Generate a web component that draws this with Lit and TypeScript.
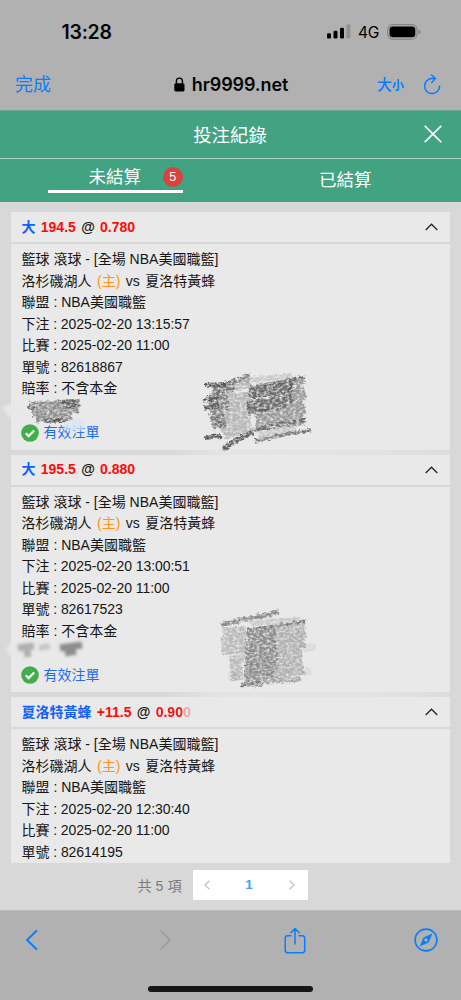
import { LitElement, html, svg, css, nothing } from "lit";
import { customElement, property } from "lit/decorators.js";

interface Bet {
  pick: string;
  line: string;
  odds: string;
  placed: string;
  id: string;
}

const BETS: Bet[] = [
  { pick: "大", line: "194.5", odds: "0.780", placed: "13:15:57", id: "82618867" },
  { pick: "大", line: "195.5", odds: "0.880", placed: "13:00:51", id: "82617523" },
  { pick: "夏洛特黃蜂", line: "+11.5", odds: "0.900", placed: "12:30:40", id: "82614195" },
];

@customElement("bet-card")
class BetCard extends LitElement {
  @property({ attribute: false }) bet!: Bet;
  @property({ type: Boolean }) partial = false;

  static styles = css`
    :host { display: block; flex: none; background: #e9e9e9; color: #161616;
      font: 14px/21.5px "Liberation Sans", "Noto Sans CJK TC", sans-serif; }
    .head { display: flex; align-items: center; justify-content: space-between; box-sizing: border-box;
      height: 32px; padding: 0 12px 0 10.5px; border-bottom: 2px solid #d8d8d8; font-weight: 700; }
    .head p { margin: 0; white-space: pre; word-spacing: 1.4px; padding-top: 1px; }
    .pick { color: #0f62fe; }
    .red { color: #ff0a0a; }
    .faded { background: linear-gradient(90deg, #ff0a0a 72%, #f3a5a5 82%); background-clip: text; -webkit-background-clip: text; color: transparent; }
    .body { padding: 5px 10.5px 0; height: 200.5px; }
    .row { height: 21.5px; white-space: pre; }
    .teams { word-spacing: 1.6px; }
    .time { letter-spacing: -.06px; }
    .home { color: #ff9321; }
    .valid { display: flex; align-items: center; gap: 4.5px; color: #1b6cf5; margin-top: 1px; margin-left: -.5px; }
    svg { display: block; }
  `;

  render() {
    const b = this.bet;
    return html`
      <div class="head">
        <p><span class="pick">${b.pick}</span> <span class="red">${b.line}</span> @ <span class=${this.partial ? "faded" : "red"}>${b.odds}</span></p>
        <svg width="13" height="8" viewBox="0 0 13 8" fill="none" stroke="#222" stroke-width="1.25"><path d="M.7 7 6.5 1.2 12.3 7" /></svg>
      </div>
      <div class="body">
        <div class="row">籃球 滾球 - [全場 NBA美國職籃]</div>
        <div class="row teams">洛杉磯湖人 <span class="home">(主)</span> vs 夏洛特黃蜂</div>
        <div class="row">聯盟 : NBA美國職籃</div>
        <div class="row time">下注 : 2025-02-20 ${b.placed}</div>
        <div class="row time">比賽 : 2025-02-20 11:00</div>
        <div class="row time">單號 : ${b.id}</div>
        ${this.partial ? nothing : html`
          <div class="row">賠率 : 不含本金</div>
          <div class="row"></div>
          <div class="row valid">
            <svg width="18" height="18" viewBox="0 0 18 18"><circle cx="9" cy="9" r="8.8" fill="#43ad4b" /><path d="m4.7 9.2 2.9 2.9 5.6-5.7" fill="none" stroke="#fff" stroke-width="2.2" /></svg>
            <span>有效注單</span>
          </div>`}
      </div>`;
  }
}

/* Hatched pencil band following a slanted stroke */
const band = (d: string, width: number, opacity: number) =>
  svg`<path d=${d} stroke-width=${width} stroke-opacity=${opacity} />`;

@customElement("app-root")
class AppRoot extends LitElement {
  static styles = css`
    :host { display: flex; flex-direction: column; position: relative; width: 461px; height: 1000px; overflow: hidden;
      background: #d8d8d8; font-family: "Liberation Sans", "Noto Sans CJK TC", sans-serif; }
    svg { display: block; flex: none; }
    .status { display: flex; align-items: center; height: 62px; box-sizing: border-box; padding: 1px 40px 0 61.5px; background: #b1b1b1; }
    .time { font: 600 19.5px Inter, sans-serif; letter-spacing: -.25px; flex: 1; color: #050505; }
    .net { font: 400 15.6px Inter, sans-serif; margin: 0 8px 0 7px; letter-spacing: -.3px; padding-top: 2px; }
    .address { display: grid; grid-template-columns: 1fr auto 1fr; align-items: center; height: 48px; box-sizing: border-box;
      padding: 0 20px 4px 15px; background: #b1b1b1; color: #087dff; }
    .done { font: 18px/24px "Noto Sans CJK TC", sans-serif; padding-bottom: 2px; }
    .site { display: flex; align-items: center; gap: 7px; color: #050505; font: 600 18px Inter, sans-serif; letter-spacing: -.1px; padding-left: 6px; }
    .tools { display: flex; justify-content: flex-end; align-items: center; gap: 19px; font-family: "Noto Sans CJK TC", sans-serif; font-weight: 500; }
    .size { font-size: 15px; padding-bottom: 2px; } .size small { font-size: 12px; font-weight: 700; }
    .title { display: grid; grid-template-columns: 1fr auto 1fr; align-items: center; height: 49px; box-sizing: border-box;
      padding: 0 19px 2px 18px; background: #41a381; color: #fff; font-size: 18.4px; border-bottom: 1px solid #b4d2c7; border-top: 1px solid #6fa893; }
    .close { justify-self: end; }
    .tabs { display: grid; grid-template-columns: 1fr 1fr; height: 43px; background: #41a381; color: #fff; font-size: 17.5px; }
    .tab { display: flex; justify-content: center; }
    .tab.on span { box-sizing: border-box; width: 135px; height: 34px; border-bottom: 3px solid #fff; text-align: center; line-height: 36px; padding-right: 1px; }
    .tab.off { line-height: 42px; padding-right: 1px; }
    .wrap { position: relative; display: flex; }
    .wrap b { position: absolute; right: 0; top: 8px; width: 20px; height: 20px; border-radius: 50%; background: #da423e;
      font: 12.5px/20px "Liberation Sans", sans-serif; text-align: center; }
    .list { display: flex; flex-direction: column; gap: 5px; height: 660.5px; box-sizing: border-box; padding: 10px 11px 0 11px; overflow: hidden; }
    bet-card { height: 237.5px; }
    .pager { display: flex; justify-content: center; align-items: center; gap: 11px; flex: 1; padding: 0 16px 3px 0; color: #7b7b7d; font-size: 14.2px; white-space: pre; }
    .pages { display: flex; align-items: center; justify-content: space-between; box-sizing: border-box; width: 115px; height: 30px; padding: 0 13px 0 11px; background: #fff; color: #409eff; font-size: 13.5px; font-weight: 700; }
    .bottom { height: 90px; box-sizing: border-box; border-top: 1px solid #bdbdbd; background: #b1b1b1; display: flex; flex-direction: column; align-items: center; }
    .nav { display: flex; align-items: center; align-self: stretch; height: 58px; padding: 0 23px 0 24.5px; }
    .next { margin: 0 112px 0 121px; }
    .compass { margin-left: 108px; }
    .home { width: 165px; height: 5.6px; border-radius: 3px; background: #161616; margin-top: 17px; }
    .marks { position: absolute; inset: 0; pointer-events: none; }
  `;

  render() {
    return html`
      <div class="status">
        <span class="time">13:28</span>
        <svg width="24" height="15" viewBox="0 0 24 15"><rect x="0" y="9.2" width="4" height="5.3" rx="1.2" /><rect x="6.5" y="6.8" width="4" height="7.7" rx="1.2" /><rect x="13" y="3.7" width="4" height="10.8" rx="1.2" /><rect x="19.4" y=".4" width="4" height="14.1" rx="1.2" fill="#929292" /></svg>
        <span class="net">4G</span>
        <svg width="34" height="16" viewBox="0 0 34 16"><rect x=".7" y=".7" width="29.4" height="14.4" rx="4.8" fill="none" stroke="#858585" stroke-width="1.2" /><rect x="2.5" y="2.5" width="25.8" height="10.8" rx="3.2" /><path d="M31.6 5.4v5q2-.7 2-2.5t-2-2.5" fill="#858585" /></svg>
      </div>
      <div class="address">
        <span class="done">完成</span>
        <span class="site"><svg width="11" height="15" viewBox="0 0 11 15"><rect x=".3" y="6.2" width="10.2" height="8.4" rx="1.6" /><path d="M2.4 7V4.1a3 3 0 0 1 6 0V7" fill="none" stroke="#000" stroke-width="1.4" /></svg>hr9999.net</span>
        <span class="tools"><span class="size">大<small>小</small></span>
          <svg width="18" height="21" viewBox="0 0 18 21" fill="none" stroke="#087dff" stroke-width="1.5" stroke-linecap="round" stroke-linejoin="round"><path d="M12.4 4.6H9.1A7.5 7.5 0 1 0 16.6 12M8.5 1l4 3.6-3.7 3.9" /></svg></span>
      </div>
      <div class="title"><i></i><span>投注紀錄</span>
        <svg class="close" width="18" height="18" viewBox="0 0 18 18" stroke="#fff" stroke-width="1.7"><path d="m.8.8 16.4 16.4m0-16.4L.8 17.2" /></svg></div>
      <div class="tabs">
        <div class="tab on"><div class="wrap"><span>未結算</span><b>5</b></div></div>
        <div class="tab off"><span>已結算</span></div>
      </div>
      <div class="list">${BETS.map((b, i) => html`<bet-card .bet=${b} ?partial=${i === 2}></bet-card>`)}</div>
      <div class="pager"><span>共 5 項</span>
        <div class="pages">
          <svg width="6" height="10" viewBox="0 0 6 10" fill="none" stroke="#c0c4cc" stroke-width="1.3"><path d="M5.4.7 1 5l4.4 4.3" /></svg>
          <span>1</span>
          <svg width="6" height="10" viewBox="0 0 6 10" fill="none" stroke="#c0c4cc" stroke-width="1.3"><path d="M.6.7 5 5 .6 9.3" /></svg>
        </div>
      </div>
      <div class="bottom">
        <div class="nav">
          <svg width="13" height="20" viewBox="0 0 13 20" fill="none" stroke="#087dff" stroke-width="1.9" stroke-linecap="round" stroke-linejoin="round"><path d="M11.4 1 2 10l9.4 9" /></svg>
          <svg class="next" width="13" height="20" viewBox="0 0 13 20" fill="none" stroke="#9b9b9b" stroke-width="1.5" stroke-linecap="round" stroke-linejoin="round"><path d="M2 1l9 9-9 9" /></svg>
          <svg width="22" height="27" viewBox="0 0 22 27" fill="none" stroke="#087dff" stroke-width="1.5" stroke-linecap="round" stroke-linejoin="round"><path d="M7 8.7H3.6Q1.2 8.7 1.2 11v12.3q0 2.4 2.4 2.4h14.7q2.4 0 2.4-2.4V11q0-2.3-2.4-2.3H15M11 17V1.6M6.8 5.8 11 1.6l4.2 4.2" /></svg>
          <svg class="compass" width="24" height="24" viewBox="0 0 24 24"><circle cx="12" cy="12" r="10.9" fill="none" stroke="#087dff" stroke-width="1.6" /><path fill="#087dff" fill-rule="evenodd" d="M18.4 5.6 14.6 14.4 5.6 18.4 9.5 9.6ZM12 10.3a1.7 1.7 0 1 0 0 3.4 1.7 1.7 0 1 0 0-3.4Z" /></svg>
        </div>
        <div class="home"></div>
      </div>
      <svg class="marks" width="461" height="1000" viewBox="0 0 461 1000" fill="none" stroke="#555">
        <defs>
          <filter id="pencil" filterUnits="userSpaceOnUse" x="0" y="360" width="461" height="340">
            <feTurbulence type="fractalNoise" baseFrequency=".3 .42" numOctaves="3" seed="4" result="n" />
            <feDisplacementMap in="SourceGraphic" in2="n" scale="5" xChannelSelector="R" yChannelSelector="G" result="d" />
            <feColorMatrix in="n" values="0 0 0 0 0 0 0 0 0 0 0 0 0 0 0 0 0 0 2.2 -.35" result="a" />
            <feComposite in="d" in2="a" operator="in" />
            <feGaussianBlur stdDeviation=".5" />
          </filter>
          <filter id="soft" filterUnits="userSpaceOnUse" x="0" y="360" width="461" height="340"><feGaussianBlur stdDeviation="1.8" /></filter>
          <linearGradient id="smear"><stop offset="0" stop-color="#e8e8e8" stop-opacity="0" /><stop offset=".2" stop-color="#e7e7e7" stop-opacity=".8" /><stop offset=".7" stop-color="#e7e7e7" stop-opacity=".75" /><stop offset="1" stop-color="#e7e7e7" stop-opacity=".3" /></linearGradient>
        </defs>
        <g stroke="none">
          <rect x="165" y="449" width="285" height="6" fill="url(#smear)" />
          <rect x="165" y="692" width="285" height="5" fill="url(#smear)" />
          <path d="M2 407 30 400V422L8 416Z" fill="#e8e8e8" filter="url(#soft)" />
          <ellipse cx="15" cy="650" rx="8" ry="7" fill="#e8e8e8" filter="url(#soft)" />
          <rect x="64" y="419" width="20" height="12" fill="#dbe5f6" opacity=".75" filter="url(#soft)" />
        </g>
        <g filter="url(#pencil)">
          ${band("M205 385 225 384M203 400l16-3M204 408l15-3M204 438l18-2", 4, 1)}
          ${band("M212 390 234 386M210 399 226 395M210 408 228 405M210 417 224 414M212 425 226 422", 9, .68)}
          ${band("M225 390 250 382M224 399 250 396M224 408 250 403M222 418 250 411M220 427 250 420M224 435 250 427", 9, .36)}
          ${band("M222 385 238 380 250 375", 4, .75)}
          ${band("M222 450 236 440 254 432", 5, .95)}
          ${band("M208 401 219 399M209 407 218 409M216 391 224 389M214 422 221 419", 7, .5)}
          ${band("M249 391 292 384M249 395 292 391M247 404 293 398M248 411 288 404", 7, .85)}
          ${band("M288 383 304 379M288 392 303 388M288 399 306 395M288 408 303 403M255 414 306 410M256 421 304 416M256 427 305 421", 8, .55)}
          ${band("M250 388 305 377M254 430 306 419", 3.5, .7)}
          ${band("M255 441 283 435 311 430", 3.5, .8)}
          ${band("M245 380 292 376M258 435 296 429M246 431 262 429", 6, .22)}
        </g>
        <g filter="url(#pencil)" stroke="#777">
          ${band("M221 625 279 612", 5, .85)}
          ${band("M223 633 246 630M221 642 246 639M221 651 246 648M230 661 246 658M230 670 242 667M231 677 243 675", 9, .42)}
          ${band("M274 630 305 625M274 639 306 633M274 649 305 643M274 658 302 653M274 667 302 662M270 675 304 669", 10, .5)}
          ${band("M250 623 300 620", 6, .28)}
          ${band("M247 630 306 621", 2.5, 1)}
          ${band("M247 637 275 631M246 645 275 639M245 653 276 648M246 661 278 655M245 669 276 664M244 677 274 672", 10, .82)}
          ${band("M241 685 262 683", 5, .95)}
          ${band("M258 682 301 679", 5, .6)}
          ${band("M302 649 315 646M302 672 312 671M228 678 238 675", 7, .15)}
        </g>
        <g filter="url(#pencil)">
          ${band("M29 406 80 403M32 413 79 409M36 419 72 416", 8, .62)}
          ${band("M60 402 76 401M66 407 78 404M45 421 66 420M29 405l5 4", 4, .9)}
        </g>
        <g filter="url(#soft)" stroke="#777">
          ${band("M18 648 34 646M24 654 31 653", 7, .5)}
          ${band("M39 648 50 646", 6, .3)}
          ${band("M60 648 82 645M65 653 76 651", 7, .8)}
        </g>
      </svg>`;
  }
}
